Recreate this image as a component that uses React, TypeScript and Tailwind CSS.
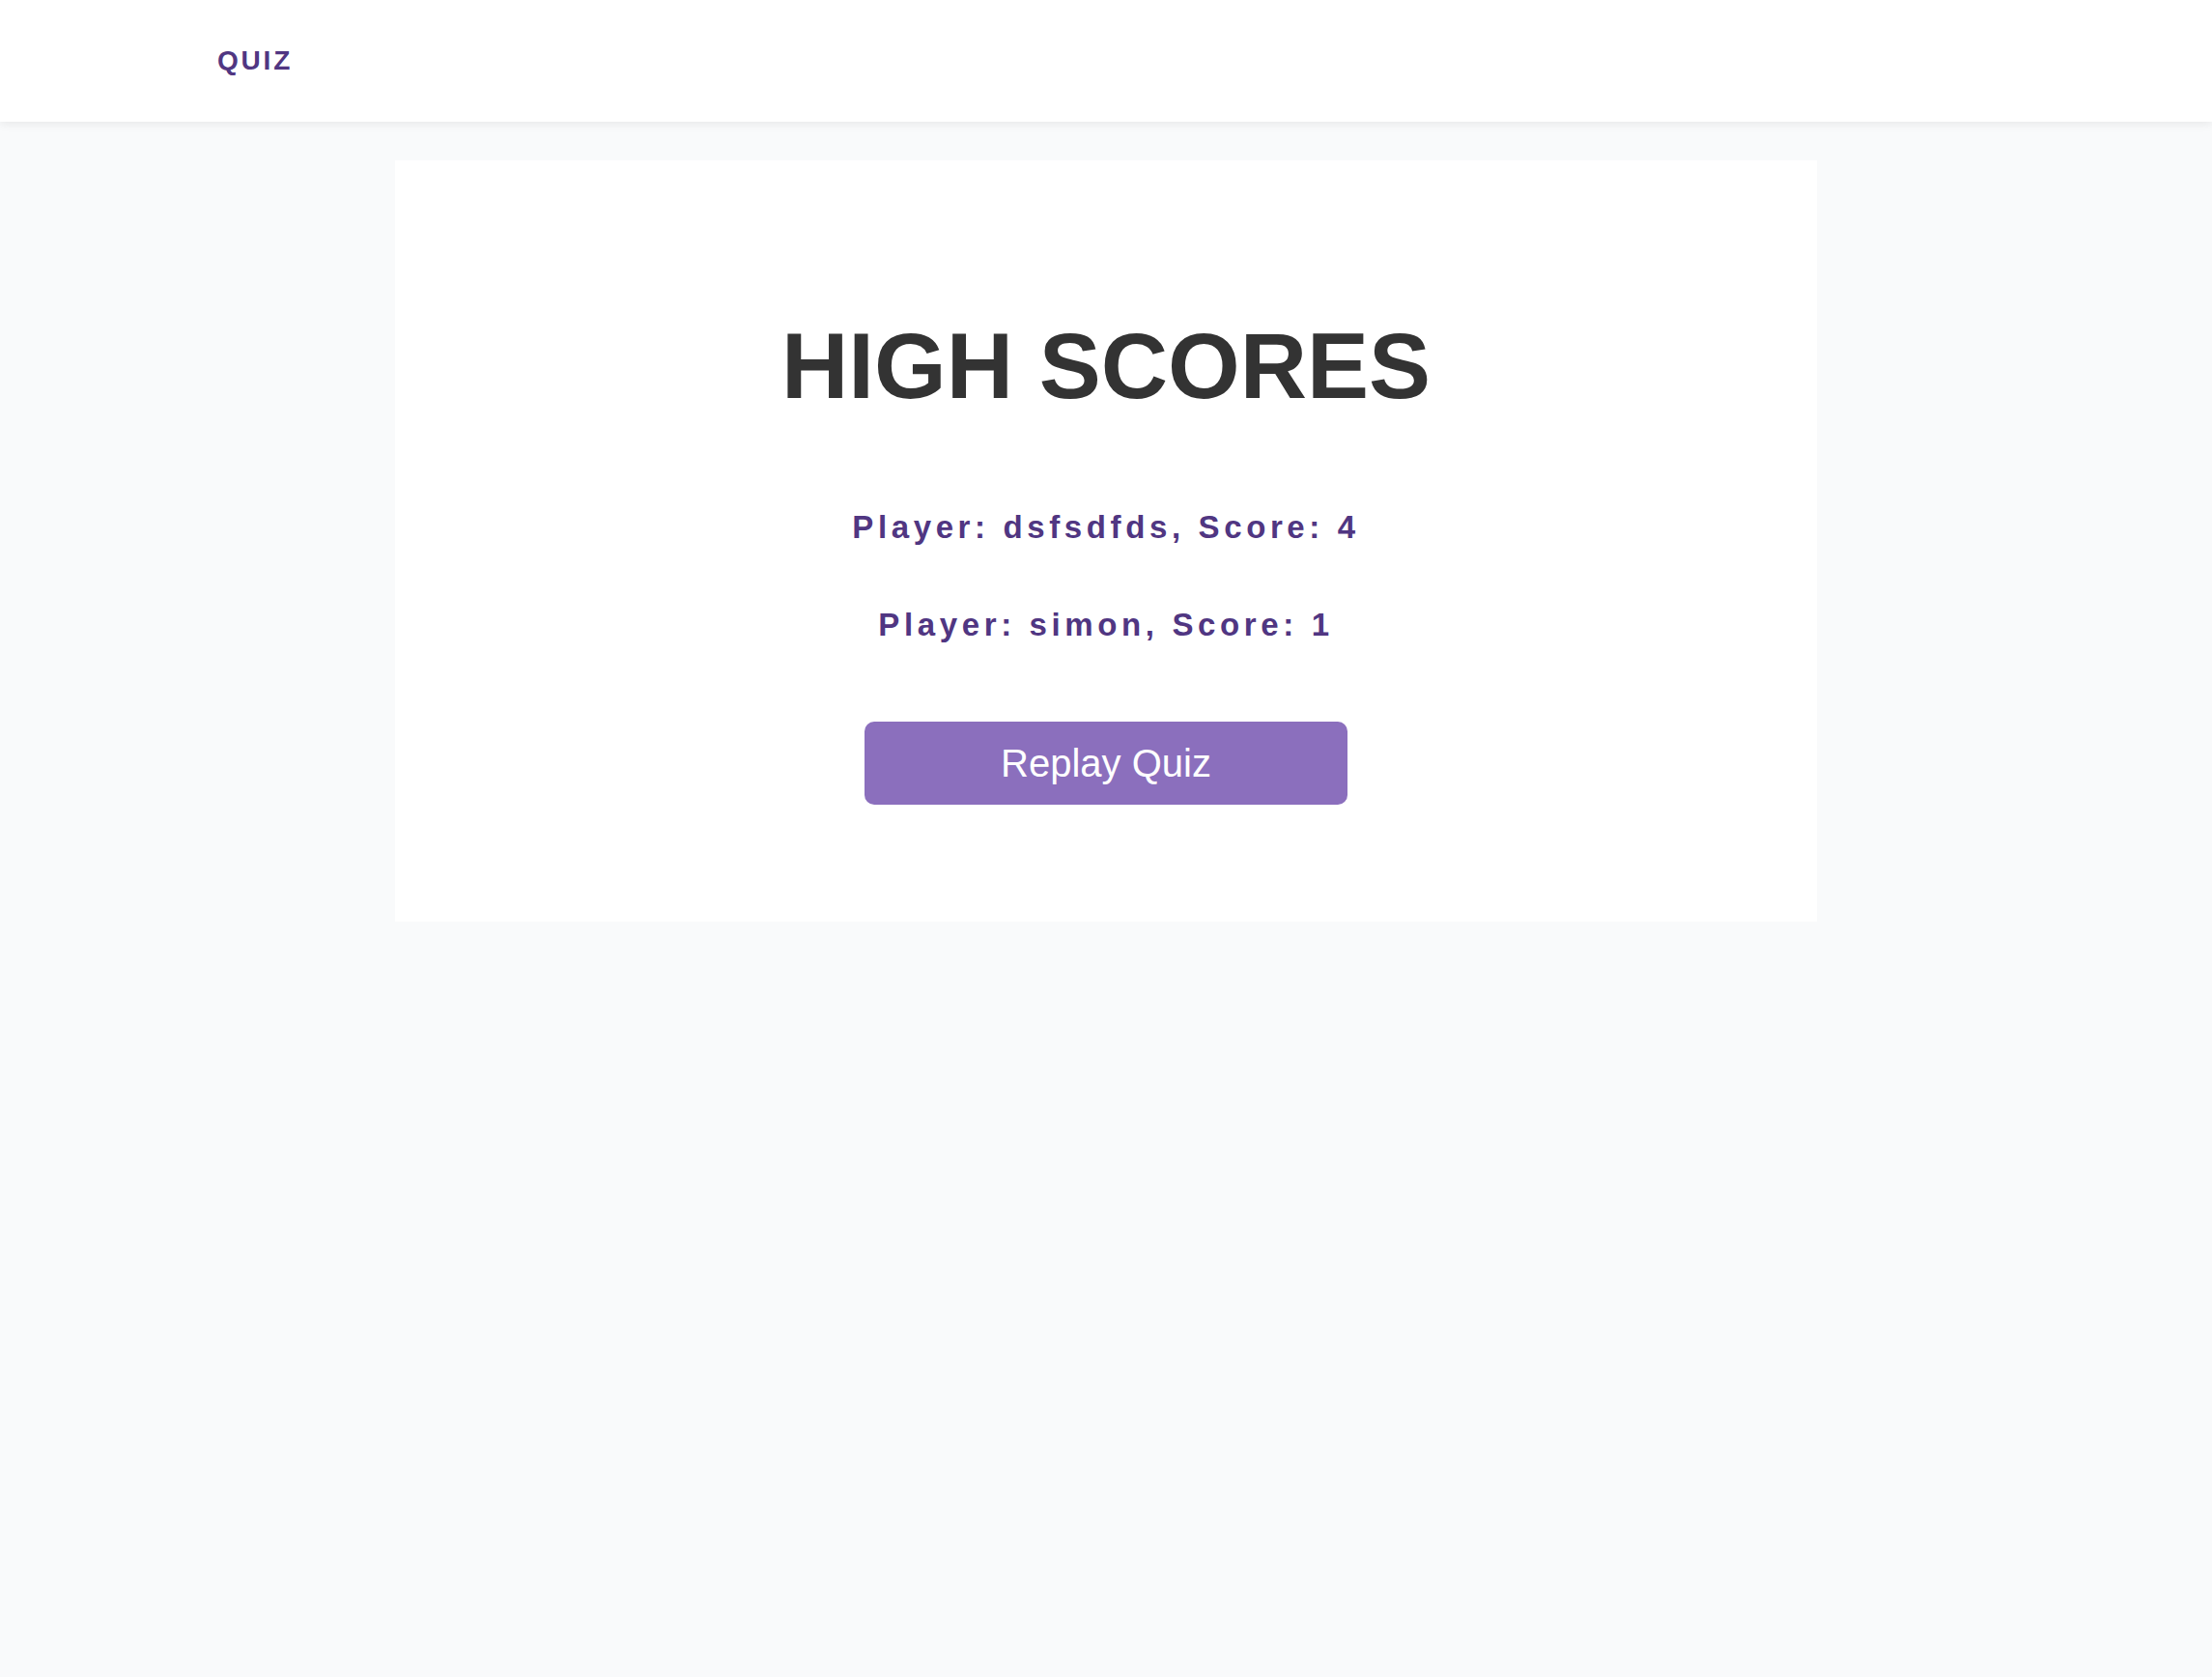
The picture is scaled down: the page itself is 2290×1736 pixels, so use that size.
const scores = [
  { player: "dsfsdfds", score: 4 },
  { player: "simon", score: 1 },
];

export default function App() {
  return (
    <div className="min-h-screen bg-[#f9fafb] font-['Liberation_Sans',Arial,sans-serif]">
      <header className="flex h-[126px] items-center bg-white pl-[225px] shadow-[0_2px_10px_rgba(0,0,0,0.08)]">
        <span className="text-[28px] font-bold uppercase tracking-[0.1em] text-[#503682]">Quiz</span>
      </header>

      <main className="pt-10">
        <section className="mx-auto flex w-[1472px] flex-col items-center bg-white pt-[165px] pb-[121px]">
          <h1 className="text-[96px] font-bold leading-none text-[#333333]">HIGH SCORES</h1>

          <ul className="mt-[102px] flex flex-col items-center gap-[68px]">
            {scores.map((s) => (
              <li key={s.player} className="text-[33px] font-bold leading-none tracking-[0.14em] text-[#503682]">
                Player: {s.player}, Score: {s.score}
              </li>
            ))}
          </ul>

          <button className="mt-[84px] h-[86px] w-[500px] rounded-[10px] bg-[#8b6fbd] text-[40px] text-white">
            Replay Quiz
          </button>
        </section>
      </main>
    </div>
  );
}
